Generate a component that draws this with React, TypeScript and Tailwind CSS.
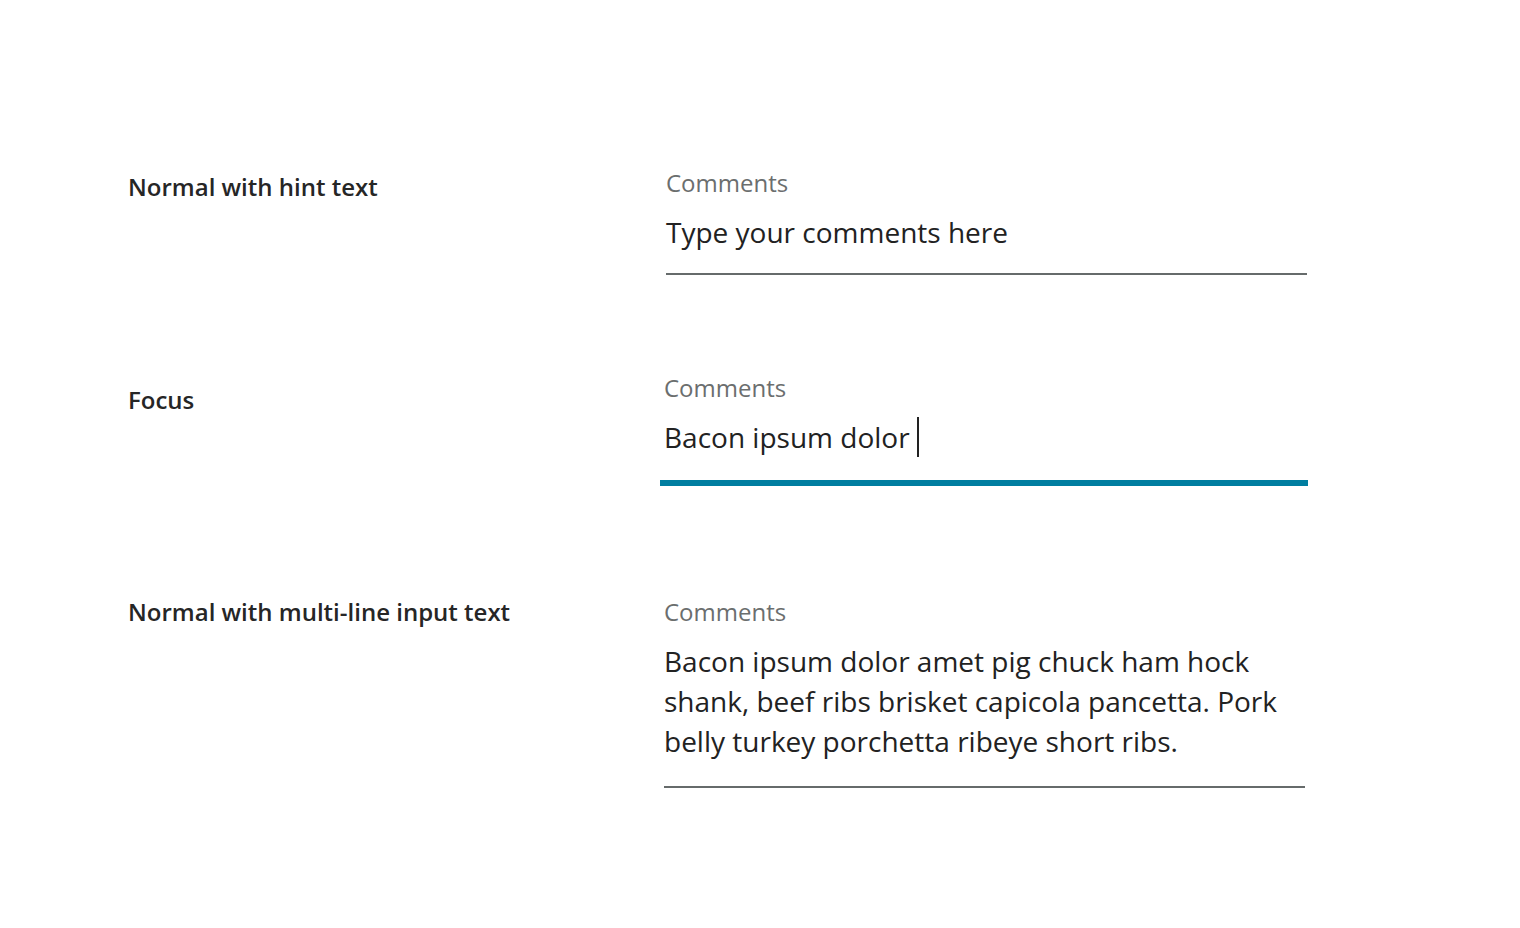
const font = { fontFamily: '"Open Sans", "Noto Sans", sans-serif' };

const Row = ({
    title,
    titleOffset,
    fieldClass,
    lineClass,
    children,
}: {
    title: string;
    titleOffset: string;
    fieldClass: string;
    lineClass: string;
    children: React.ReactNode;
}) => (
    <div className="flex">
        <div className={`w-[536px] shrink-0 ${titleOffset}`}>
            <div className="text-[24px] leading-[32px] font-semibold text-[#262626]">{title}</div>
        </div>
        <div className={fieldClass}>
            <div className="text-[24px] leading-[32px] text-[#6b6e6e]">Comments</div>
            <div className="mt-[13px] text-[28px] leading-[40px] text-[#222222]">{children}</div>
            <div className={lineClass} />
        </div>
    </div>
);

export default function App() {
    return (
        <div className="min-h-[928px] w-[1520px] bg-white pl-[128px] pt-[167px]" style={font}>
            <Row
                title="Normal with hint text"
                titleOffset="pt-[4px]"
                fieldClass="w-[642px] ml-[1px] pl-[1px]"
                lineClass="mt-[21px] h-[2px] bg-[#666b6b]"
            >
                Type your comments here
            </Row>
            <div className="h-[97px]" />
            <Row
                title="Focus"
                titleOffset="pt-[12px]"
                fieldClass="w-[644px]"
                lineClass="mt-[23px] -ml-[4px] h-[6px] w-[648px] bg-[#007ea0]"
            >
                <span className="inline-flex items-center">
                    Bacon ipsum dolor
                    <span className="ml-[7px] inline-block h-[40px] w-[2px] bg-[#222222]" />
                </span>
            </Row>
            <div className="h-[110px]" />
            <Row
                title="Normal with multi-line input text"
                titleOffset="pt-0"
                fieldClass="w-[642px] -ml-[1px] pl-[1px]"
                lineClass="mt-[25px] h-[2px] bg-[#666b6b]"
            >
                Bacon ipsum dolor amet pig chuck ham hock
                <br />
                shank, beef ribs brisket capicola pancetta. Pork
                <br />
                belly turkey porchetta ribeye short ribs.
            </Row>
        </div>
    );
}
